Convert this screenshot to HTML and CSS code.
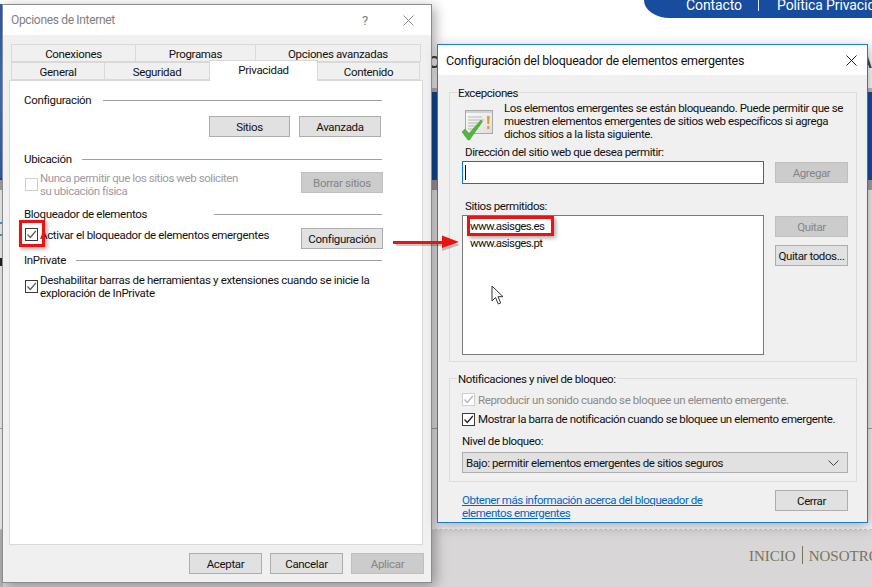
FILE: index.html
```html
<!DOCTYPE html>
<html lang="es">
<head>
<meta charset="utf-8">
<title>Opciones de Internet</title>
<link rel="stylesheet" href="styles.css">
</head>
<body>
<div class="desktop">
  <div class="backdrop">
    <div class="bd-top">
      <div class="bd-tab"><span>Contacto</span><i></i><span>Política Privacidad</span></div>
      <div class="bd-heading"><span>C</span><span>A</span></div>
    </div>
    <div class="bd-mauve"></div>
    <div class="bd-blue"></div>
    <div class="bd-grey"></div>
    <div class="bd-white"></div>
    <div class="bd-rule"></div>
    <div class="bd-white2"></div>
    <div class="bd-foot"><span>INICIO</span><i></i><span>NOSOTROS</span></div>
  </div>
  <div class="bd-strip"></div>
  <div class="bd-bits"></div>
  <div class="bd-corner"></div>

  <section class="win win-a">
    <header class="titlebar muted">
      <span class="title">Opciones de Internet</span>
      <span class="help">?</span>
      <svg class="close-a" width="11" height="11" viewBox="0 0 11 11"><path d="M.5.5l10 10M10.5.5l-10 10" stroke="#8a8a8a" fill="none"/></svg>
    </header>
    <div class="tabs">
      <div class="tabrow">
        <span class="tab t1">Conexiones</span><span class="tab t2">Programas</span><span class="tab t3">Opciones avanzadas</span>
      </div>
      <div class="tabrow">
        <span class="tab t4">General</span><span class="tab t5">Seguridad</span><span class="tab t6 on">Privacidad</span><span class="tab t7">Contenido</span>
      </div>
    </div>
    <div class="panel">
      <div class="sect s1"><span>Configuración</span><i></i></div>
      <div class="btnrow b1"><button class="btn w81">Sitios</button><button class="btn w82">Avanzada</button></div>
      <div class="sect s2"><span>Ubicación</span><i></i></div>
      <div class="optrow o1">
        <span class="cb cb-off cb-down"></span>
        <p class="opt dim">Nunca permitir que los sitios web soliciten<br>su ubicación física</p>
        <button class="btn off w82 push">Borrar sitios</button>
      </div>
      <div class="sect s3"><span>Bloqueador de elementos</span><i></i></div>
      <div class="optrow o2">
        <span class="cb"><svg width="11" height="11" viewBox="0 0 11 11"><path d="M1.5 5.5l2.8 3L9.8 2" stroke="#5a5a5a" stroke-width="1.2" fill="none"/></svg></span>
        <p class="opt up">Activar el bloqueador de elementos emergentes</p>
        <button class="btn w82 push">Configuración</button>
      </div>
      <div class="sect s4"><span>InPrivate</span><i></i></div>
      <div class="optrow o3">
        <span class="cb cb-down"><svg width="11" height="11" viewBox="0 0 11 11"><path d="M1.5 5.5l2.8 3L9.8 2" stroke="#5a5a5a" stroke-width="1.2" fill="none"/></svg></span>
        <p class="opt">Deshabilitar barras de herramientas y extensiones cuando se inicie la<br>exploración de InPrivate</p>
      </div>
    </div>
    <footer class="foot-a">
      <button class="btn w73">Aceptar</button><button class="btn w73">Cancelar</button><button class="btn off w73">Aplicar</button>
    </footer>
  </section>

  <section class="win win-b">
    <header class="titlebar">
      <span class="title">Configuración del bloqueador de elementos emergentes</span>
      <svg class="close-b" width="11" height="11" viewBox="0 0 11 11"><path d="M.5.5l10 10M10.5.5l-10 10" stroke="#222" fill="none"/></svg>
    </header>
    <div class="group g1">
      <span class="legend">Excepciones</span>
      <div class="intro">
        <svg class="doc" width="32" height="31" viewBox="0 0 32 31">
          <defs><linearGradient id="pg" x1="0" y1="0" x2="1" y2="1"><stop offset="0" stop-color="#fbfbfb"/><stop offset="1" stop-color="#dedede"/></linearGradient></defs>
          <rect x="3.5" y=".5" width="27" height="23" fill="url(#pg)" stroke="#a9a9a9"/>
          <rect x="4" y="1" width="26" height="2" fill="#cfd3d8"/>
          <path d="M6 7h14M6 10h16M6 13h14M6 16h12M6 19h10" stroke="#b8b8b0"/>
          <path d="M25 6h2.6l-.4 8h-1.800z" fill="#e8962a"/>
          <rect x="25.200" y="16" width="2.200" height="3" fill="#e8962a"/>
          <path d="M0 22l3-3 4 4.500L19 10l1.500 1.500L7.500 30h-1.500z" fill="#53b53a" stroke="#3b9a2a" stroke-width=".5"/>
        </svg>
        <p class="intro-text">Los elementos emergentes se están bloqueando. Puede permitir que se<br>muestren elementos emergentes de sitios web específicos si agrega<br>dichos sitios a la lista siguiente.</p>
      </div>
      <label class="fld f1">Dirección del sitio web que desea permitir:</label>
      <div class="inrow">
        <div class="input"><i></i></div>
        <button class="btn off w73 lower">Agregar</button>
      </div>
      <label class="fld f2">Sitios permitidos:</label>
      <div class="listrow">
        <ul class="list"><li>www.asisges.es</li><li>www.asisges.pt</li></ul>
        <div class="listbtns"><button class="btn off w73">Quitar</button><button class="btn w73">Quitar todos...</button></div>
      </div>
    </div>
    <div class="group g2">
      <span class="legend">Notificaciones y nivel de bloqueo:</span>
      <div class="chk c1">
        <span class="cb cb-off"><svg width="11" height="11" viewBox="0 0 11 11"><path d="M1.500 5.500l2.800 3L9.800 2" stroke="#b5b5b5" stroke-width="1.300" fill="none"/></svg></span>
        <span class="dim2">Reproducir un sonido cuando se bloquee un elemento emergente.</span>
      </div>
      <div class="chk c2">
        <span class="cb"><svg width="11" height="11" viewBox="0 0 11 11"><path d="M1.500 5.500l2.800 3L9.800 2" stroke="#222" stroke-width="1.300" fill="none"/></svg></span>
        <span>Mostrar la barra de notificación cuando se bloquee un elemento emergente.</span>
      </div>
      <label class="lvl">Nivel de bloqueo:</label>
      <div class="select"><span>Bajo: permitir elementos emergentes de sitios seguros</span>
        <svg width="11" height="6" viewBox="0 0 11 6"><path d="M.5.500l5 5 5-5" stroke="#444" fill="none"/></svg>
      </div>
    </div>
    <div class="foot-b">
      <a class="link" href="#">Obtener más información acerca del bloqueador de<br>elementos emergentes</a>
      <button class="btn w73">Cerrar</button>
    </div>
  </section>

  <div class="mark mark-cb"></div>
  <div class="mark mark-site"></div>
  <svg class="arrow" width="72" height="20" viewBox="0 0 72 20">
    <path d="M3 12h46v-5l18 6-18 6v-5H3z" fill="#000" opacity=".22"/>
    <path d="M0 9h49V3.500l17 6.500-17 6V12H0z" fill="#ee1111"/>
  </svg>
  <svg class="cursor" width="14" height="21" viewBox="0 0 14 21">
    <path d="M1 1v15l3.500-3.500 2.800 6.500 2.400-1-2.700-6.300H12z" fill="#fff" stroke="#333" stroke-width="1"/>
  </svg>
</div>
</body>
</html>
```

FILE: styles.css
```css
* { box-sizing: border-box; }
html, body { margin: 0; padding: 0; }
body { font-family: Roboto, "Open Sans", sans-serif; font-size: 11.5px; letter-spacing: -.33px; line-height: 13px; color: #111; }
.desktop { position: relative; width: 872px; height: 587px; overflow: hidden; background: #fff; }

/* page behind the dialogs */
.backdrop { display: flex; flex-direction: column; height: 587px; }
.bd-top { height: 88px; background: #fff; overflow: hidden; }
.bd-tab { width: 228px; height: 18px; margin-left: auto; background: #174c9f; border-bottom-left-radius: 26px 18px; color: #fff; font-size: 14px; letter-spacing: -.1px; line-height: 10px; display: flex; gap: 16px; padding-left: 42px; white-space: nowrap; overflow: hidden; }
.bd-tab i { flex: none; width: 1px; height: 11px; margin-right: 2px; background: #dfe8f5; }
.bd-heading { display: flex; justify-content: space-between; width: 444px; margin: 36px 0 0 428px; color: #444; font: bold 16px/18px "Liberation Sans", sans-serif; letter-spacing: 0; }
.bd-mauve { height: 4px; background: #c4bcd0; }
.bd-blue { height: 88px; background: #174c9f; }
.bd-grey { height: 10px; background: #a7a3a8; }
.bd-white { height: 238px; background: #f1f1f1; }
.bd-rule { height: 1px; background: #a8a8a8; }
.bd-white2 { height: 101px; background: #f4f4f4; border-bottom: 1px dashed #c9c9c9; }
.bd-foot { flex: 1; background: #d8d6d6; color: #77735f; font-family: "Liberation Serif", serif; font-size: 15px; letter-spacing: 0; line-height: 20px; display: flex; gap: 6px; padding: 16px 0 0 749px; white-space: nowrap; }
.bd-foot i { flex: none; width: 1px; height: 18px; background: #77735f; }
.bd-strip { position: absolute; left: 0; top: 4px; width: 3px; height: 174px; background: linear-gradient(#2a5cb0, #3f76c6 50%, #2b62b8); }
.bd-bits { position: absolute; left: 0; top: 222px; width: 3px; height: 44px; background: linear-gradient(#35a4dc 0 2px, transparent 2px 12px, #35a4dc 12px 14px, transparent 14px 36px, #222 36px 44px); }
.bd-corner { position: absolute; left: 0; top: 530px; width: 3px; height: 57px; background: #b6b6b6; }

/* windows */
.win { position: absolute; background: #f0f0f0; display: flex; flex-direction: column; }
.win-a { left: 2px; top: 4px; width: 430px; height: 579px; border: 1px solid #8c8c8c; box-shadow: 3px 3px 12px rgba(0,0,0,.35); }
.win-b { left: 437px; top: 44px; width: 431px; height: 479px; border: 1px solid #1b7cd3; box-shadow: 2px 3px 12px rgba(0,0,0,.3); }
.titlebar { height: 30px; flex: none; background: #fff; display: flex; align-items: center; padding-left: 8px; font-size: 12px; }
.titlebar.muted { color: #808080; }
.win-b .title { font-size: 12.5px; letter-spacing: -.25px; }
.help { margin-left: auto; width: 10px; font-size: 13px; }
.close-a { margin-left: 31px; margin-right: 17px; }
.close-b { margin-left: auto; margin-right: 10px; }

/* tabs */
.tabs { margin: 9px 8px 0 8px; }
.tabrow { display: flex; height: 18px; }
.tab { height: 18px; background: #f0f0f0; border: 1px solid #d9d9d9; text-align: center; line-height: 18px; margin-left: -1px; }
.tabrow .tab:first-child { margin-left: 0; }
.t1 { width: 125px; } .t2 { width: 121px; } .t3 { width: 166px; }
.t4 { width: 94px; } .t5 { width: 106px; } .t6 { width: 109px; } .t7 { width: 103px; }
.tab.on { position: relative; z-index: 1; height: 21px; margin-top: -2px; background: #fff; border-bottom: 0; line-height: 19px; }

.panel { margin: 0 8px 0 6px; height: 465px; background: #fff; border: 1px solid #d9d9d9; padding: 11px 40px 0 14px; }
.sect { display: flex; align-items: center; height: 16px; white-space: nowrap; }
.sect i { flex: 1; height: 1px; background: #a0a0a0; }
.s1 span { width: 79px; }
.s2 { margin-top: 14px; } .s2 span { width: 58px; }
.s3 { margin-top: 9px; } .s3 span { width: 190px; }
.s4 { margin-top: 3px; } .s4 span { width: 52px; }
.btnrow { display: flex; justify-content: flex-end; gap: 9px; height: 21px; }
.b1 { margin-top: 8px; margin-right: 1px; }
.optrow { display: flex; align-items: flex-start; }
.o1 { margin-top: 5px; height: 25px; }
.o2 { margin-top: 6px; height: 21px; }
.o3 { margin-top: 6px; height: 26px; }
.opt { margin: 0 0 0 2px; white-space: nowrap; }
.opt.up { margin-top: 1px; }
.dim { color: #9c9c9c; letter-spacing: -.43px; }
.push { margin-left: auto; margin-right: -1px; }

.btn { height: 21px; padding: 0; background: #e1e1e1; border: 1px solid #adadad; font: inherit; letter-spacing: inherit; color: #111; line-height: 18px; white-space: nowrap; }
.btn.off { background: #ccc; border-color: #bfbfbf; color: #858585; }
.w81 { width: 81px; } .w82 { width: 82px; } .w73 { width: 73px; }

.cb { flex: none; width: 13px; height: 13px; margin-left: 1px; border: 1px solid #3a3a3a; background: #fff; display: block; }
.cb svg { display: block; }
.cb-off { border-color: #cfcfcf; }
.cb-down { margin-top: 6px; }

.foot-a { display: flex; justify-content: flex-end; gap: 8px; margin: 8px 7px 0 0; }

/* right dialog */
.win-b { letter-spacing: -.4px; }
.group { margin-left: 11px; width: 408px; border: 1px solid #dcdcdc; display: flex; flex-direction: column; padding: 0 8px 0 12px; }
.g1 { margin-top: 17px; height: 270px; }
.g2 { margin-top: 16px; height: 104px; }
.legend { align-self: flex-start; height: 14px; margin: -7px 0 0 -5px; padding: 1px 1px 0; background: #f0f0f0; }
.intro { display: flex; height: 39px; margin-top: 2px; }
.doc { flex: none; margin-top: 8px; }
.intro-text { margin: 0 0 0 10px; white-space: nowrap; }
.fld { display: block; height: 14px; padding: 1px 0 0 3px; }
.f1 { margin-top: 4px; }
.f2 { margin-top: 15px; }
.inrow { display: flex; justify-content: space-between; margin-top: 2px; height: 23px; }
.input { width: 302px; height: 23px; background: #fff; border: 1px solid #0078d7; padding: 3px 2px; }
.input i { display: block; width: 1px; height: 15px; background: #111; }
.lower { margin-top: 1px; }
.listrow { display: flex; justify-content: space-between; margin-top: 2px; height: 140px; }
.list { list-style: none; margin: 0; padding: 2px 0 0 7px; width: 302px; height: 140px; background: #fff; border: 1px solid #7a7a7a; }
.list li { height: 17px; line-height: 17px; letter-spacing: -.6px; }
.listbtns { display: flex; flex-direction: column; gap: 8px; margin-top: 1px; }
.chk { display: flex; align-items: center; gap: 3px; height: 13px; white-space: nowrap; }
.chk .cb { margin-left: 0; }
.c1 { margin-top: 7px; }
.c1 .dim2 { margin-top: 1px; }
.c2 { margin-top: 7px; }
.dim2 { color: #8a8a8a; }
.lvl { height: 14px; margin-top: 9px; }
.select { display: flex; justify-content: space-between; align-items: center; margin-top: 3px; width: 386px; height: 21px; background: #e1e1e1; border: 1px solid #adadad; padding: 1px 8px 0 3px; }
.select svg { margin-top: -1px; }
.foot-b { display: flex; justify-content: space-between; align-items: flex-start; margin-top: 8px; padding: 0 19px 0 24px; }
.link { margin-top: 4px; color: #0066cc; text-decoration: underline; white-space: nowrap; letter-spacing: -.45px; }

/* annotations on top of the screenshot */
.mark { position: absolute; border: 3px solid #ee1111; box-shadow: 2px 2px 4px rgba(0,0,0,.35); }
.mark-cb { left: 19px; top: 220px; width: 26px; height: 27px; }
.mark-site { left: 467px; top: 216px; width: 87px; height: 20px; }
.arrow { position: absolute; left: 393px; top: 232px; }
.cursor { position: absolute; left: 491px; top: 285px; }
```
